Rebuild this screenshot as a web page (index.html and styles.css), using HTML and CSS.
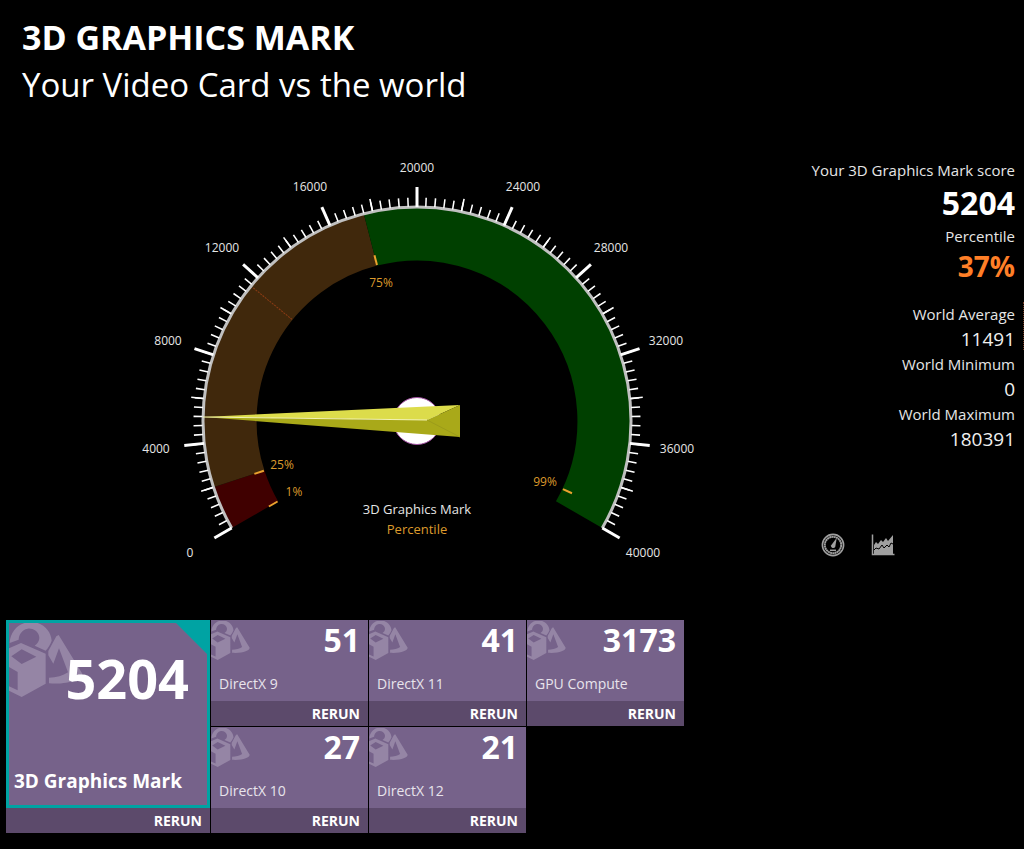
FILE: index.html
```html
<!DOCTYPE html>
<html lang="en">
<head>
<meta charset="utf-8">
<title>3D Graphics Mark</title>
<meta name="viewport" content="width=device-width, initial-scale=1">
<link rel="stylesheet" href="styles.css">
</head>
<body>
<svg class="defs" aria-hidden="true">
  <symbol id="shapes" viewBox="0 0 222 222">
    <path d="M2 60C4 22 32 -3 66 -3C102 -3 126 24 128 53C124 64 118 74 110 83L77 68C89 60 93 50 90 38C86 24 72 15 56 17C38 20 29 36 29 50Z"/>
    <path fill-rule="evenodd" d="M0 76L36 60L110 92V182L38 222L0 203V190L26 202V147L0 132ZM7 100L38 79L82 101L38 123Z"/>
    <path d="M149 36L220 152C220 168 180 185 120 181V164C142 164 162 158 177 148L150 76L133 122L118 97V84L142 40Z"/>
  </symbol>
</svg>

<header class="header">
  <h1 class="title">3D GRAPHICS MARK</h1>
  <p class="subtitle">Your Video Card vs the world</p>
</header>

<main>
  <div class="overview">
    <svg class="gauge" viewBox="0 0 560 420" role="img" aria-label="3D Graphics Mark gauge showing 5204">
      <defs>
        <line id="major" y1="-214" y2="-234" class="tick-major"/>
        <line id="marker" y1="-161" y2="-171" class="marker"/>
      </defs>
      <g transform="translate(277 271)">
        <g class="band">
          <path class="low" d="M-161.9 93.5A187 187 0 0 1 -177.8 57.8"/>
          <path class="mid" d="M-177.8 57.8A187 187 0 0 1 -46.5 -181.1"/>
          <path class="high" d="M-46.5 -181.1A187 187 0 0 1 161.9 93.5"/>
        </g>
        <line class="average" y1="-161" y2="-212" transform="rotate(-50.9)"/>
        <path class="rim" d="M-185.3 107A214 214 0 1 1 185.3 107"/>
        <path class="tick-minor" pathLength="100" d="M-189.7 109.5A219 219 0 1 1 189.7 109.5"/>
        <path class="tick-medium" pathLength="20" d="M-191.4 110.5A221 221 0 1 1 191.4 110.5"/>
        <use href="#major" transform="rotate(-120)"/>
        <use href="#major" transform="rotate(-96)"/>
        <use href="#major" transform="rotate(-72)"/>
        <use href="#major" transform="rotate(-48)"/>
        <use href="#major" transform="rotate(-24)"/>
        <use href="#major"/>
        <use href="#major" transform="rotate(24)"/>
        <use href="#major" transform="rotate(48)"/>
        <use href="#major" transform="rotate(72)"/>
        <use href="#major" transform="rotate(96)"/>
        <use href="#major" transform="rotate(120)"/>
        <use href="#marker" transform="rotate(-120)"/>
        <use href="#marker" transform="rotate(-108)"/>
        <use href="#marker" transform="rotate(-14.4)"/>
        <use href="#marker" transform="rotate(115)"/>
        <circle class="hub" r="23.5"/>
        <path class="needle-top" d="M-214 -4L43 -16L10 -1Z"/>
        <path class="needle-base" d="M-214 -4L10 -1L43 -16V16Z"/>
        <path class="needle-ridge" d="M-214 -4L10 -1"/>
        <path class="needle-fold" d="M10 -1L43 16"/>
      </g>
      <g class="scale">
        <text x="50" y="407">0</text>
        <text x="16" y="303">4000</text>
        <text x="28" y="195">8000</text>
        <text x="82" y="102">12000</text>
        <text x="170" y="41">16000</text>
        <text x="277" y="22">20000</text>
        <text x="383" y="41">24000</text>
        <text x="471" y="102">28000</text>
        <text x="526" y="195">32000</text>
        <text x="537" y="303">36000</text>
        <text x="503" y="407">40000</text>
      </g>
      <g class="scale percent">
        <text x="154" y="346">1%</text>
        <text x="142" y="319">25%</text>
        <text x="241" y="137">75%</text>
        <text x="405" y="336">99%</text>
      </g>
      <text class="caption" x="277" y="364">3D Graphics Mark</text>
      <text class="caption percent" x="277" y="384">Percentile</text>
    </svg>

    <aside class="stats">
      <dl class="figures">
        <dt>Your 3D Graphics Mark score</dt>
        <dd class="score">5204</dd>
        <dt>Percentile</dt>
        <dd class="rank">37%</dd>
        <dt>World Average</dt>
        <dd>11491</dd>
        <dt>World Minimum</dt>
        <dd>0</dd>
        <dt>World Maximum</dt>
        <dd>180391</dd>
      </dl>
      <div class="views">
        <button class="view" type="button" aria-label="Gauge view">
          <svg viewBox="0 0 24 24">
            <circle cx="12" cy="12" r="10.6" fill="none" stroke="currentColor" stroke-width="1.6"/>
            <circle cx="12" cy="12" r="8.2" fill="none" stroke="currentColor" stroke-width="1.9" stroke-dasharray="2 .3"/>
            <path d="M15.8 4.8L14.2 14A2.3 2.3 0 0 1 10 12.4Z" fill="currentColor"/>
            <path d="M9 17.3h6" stroke="currentColor" stroke-width="1.5"/>
          </svg>
        </button>
        <button class="view" type="button" aria-label="Chart view">
          <svg viewBox="0 0 24 24">
            <path d="M1.5 1.5V21.5H23.5" fill="none" stroke="currentColor" stroke-width="1.5"/>
            <path d="M3 12L5 9L7 11L10 7L12 9L15 5L17 8L22 2V21H3Z" fill="currentColor"/>
            <path d="M3 17L5 15L8 16L11 12L13 15L16 12L18 14L20 10L22 11" fill="none" stroke="#000" stroke-width="1"/>
          </svg>
        </button>
      </div>
    </aside>
  </div>

  <section class="tiles" aria-label="Test results">
    <article class="tile tile-main">
      <div class="tile-body">
        <svg class="tile-icon" aria-hidden="true"><use href="#shapes"/></svg>
        <strong class="tile-score">5204</strong>
        <h2 class="tile-name">3D Graphics Mark</h2>
      </div>
      <button class="rerun" type="button">RERUN</button>
    </article>
    <article class="tile">
      <div class="tile-body">
        <svg class="tile-icon" aria-hidden="true"><use href="#shapes"/></svg>
        <strong class="tile-score">51</strong>
        <h2 class="tile-name">DirectX 9</h2>
      </div>
      <button class="rerun" type="button">RERUN</button>
    </article>
    <article class="tile">
      <div class="tile-body">
        <svg class="tile-icon" aria-hidden="true"><use href="#shapes"/></svg>
        <strong class="tile-score">41</strong>
        <h2 class="tile-name">DirectX 11</h2>
      </div>
      <button class="rerun" type="button">RERUN</button>
    </article>
    <article class="tile">
      <div class="tile-body">
        <svg class="tile-icon" aria-hidden="true"><use href="#shapes"/></svg>
        <strong class="tile-score">3173</strong>
        <h2 class="tile-name">GPU Compute</h2>
      </div>
      <button class="rerun" type="button">RERUN</button>
    </article>
    <article class="tile">
      <div class="tile-body">
        <svg class="tile-icon" aria-hidden="true"><use href="#shapes"/></svg>
        <strong class="tile-score">27</strong>
        <h2 class="tile-name">DirectX 10</h2>
      </div>
      <button class="rerun" type="button">RERUN</button>
    </article>
    <article class="tile">
      <div class="tile-body">
        <svg class="tile-icon" aria-hidden="true"><use href="#shapes"/></svg>
        <strong class="tile-score">21</strong>
        <h2 class="tile-name">DirectX 12</h2>
      </div>
      <button class="rerun" type="button">RERUN</button>
    </article>
  </section>
</main>
</body>
</html>
```
FILE: styles.css
```css
* { box-sizing: border-box; }

body {
  margin: 0;
  background: #000;
  color: #fff;
  font-family: "Open Sans", "Noto Sans", sans-serif;
}

h1, h2, p, dl, dd { margin: 0; }

button {
  border: 0;
  font: inherit;
  color: inherit;
  cursor: pointer;
}

.defs {
  position: absolute;
  width: 0;
  height: 0;
}

/* Header */
.header { padding: 13px 22px 0; }

.title {
  font-size: 34px;
  line-height: 48px;
  font-weight: 700;
}

.subtitle {
  font-size: 33px;
  line-height: 47px;
  font-weight: 400;
}

/* Gauge and figures */
.overview {
  display: flex;
  justify-content: space-between;
  align-items: flex-start;
  padding: 42px 0 50px 140px;
}

.gauge {
  flex: 0 1 560px;
  min-width: 0;
  overflow: visible;
}

.band path { fill: none; stroke-width: 53; }
.band .low { stroke: #400000; }
.band .mid { stroke: #40280c; }
.band .high { stroke: #004000; }
.average { stroke: #8c3c14; stroke-width: 1; stroke-dasharray: 2 1; }
.rim { fill: none; stroke: #c0c0c0; stroke-width: 3; }

.tick-minor, .tick-medium { fill: none; stroke: #fff; }
.tick-minor { stroke-width: 9; stroke-dasharray: .17 .83; stroke-dashoffset: .085; }
.tick-medium { stroke-width: 12; stroke-dasharray: .034 .966; stroke-dashoffset: .017; }
.tick-major { stroke: #fff; stroke-width: 3; }
.marker { stroke: #eba22e; stroke-width: 2; }

.hub { fill: #fff; stroke: #a050a0; stroke-width: 1; }
.needle-top { fill: #dcdc4b; }
.needle-base { fill: #a9a919; }
.needle-ridge { stroke: #f4f4b4; stroke-width: 1; }
.needle-fold { stroke: #9c9c1a; stroke-width: 1; }

.scale { fill: #e6e6e6; font-size: 12px; text-anchor: middle; }
.caption { fill: #e6e6e6; font-size: 13px; text-anchor: middle; }
.percent { fill: #dd9a2c; }

.stats {
  position: relative;
  flex: 0 0 220px;
  padding: 8px 9px 0 0;
}

/* Edge of the dotted page divider */
.stats::after {
  content: "";
  position: absolute;
  top: 152px;
  right: 0;
  height: 48px;
  border-right: 1px dotted #703a22;
}

.figures { text-align: right; }

.figures dt {
  color: #e6e6e6;
  font-size: 15px;
  line-height: 24px;
}

.figures dd {
  color: #f0f0f0;
  font-size: 19px;
  line-height: 26px;
}

.figures .score {
  color: #fff;
  font-size: 32px;
  line-height: 42px;
  font-weight: 700;
}

.figures .rank {
  padding-bottom: 18px;
  color: #ff7f27;
  font-size: 28px;
  line-height: 36px;
  font-weight: 700;
}

.views {
  display: flex;
  gap: 26px;
  padding: 81px 0 0 17px;
}

.view {
  width: 24px;
  height: 24px;
  padding: 0;
  background: none;
  color: #a0a0a0;
}

.view svg { display: block; }

/* Tiles */
.tiles {
  display: grid;
  grid-template-columns: minmax(0, 204px) repeat(3, minmax(0, 157px));
  gap: 1px;
  padding: 0 6px 16px;
}

.tile {
  display: flex;
  flex-direction: column;
  background: #76628a;
}

.tile-body {
  position: relative;
  display: flex;
  flex: 1;
  flex-direction: column;
  justify-content: space-between;
  min-height: 81px;
  padding: 0 8px 6px;
}

.tile-icon {
  position: absolute;
  top: 1px;
  left: 0;
  width: 39px;
  height: 39px;
  fill: #9585a5;
}

.tile-score {
  position: relative;
  align-self: flex-end;
  font-size: 32px;
  line-height: 40px;
}

.tile-name {
  position: relative;
  color: #e8e4ec;
  font-size: 14px;
  line-height: 22px;
  font-weight: 400;
}

.rerun {
  height: 25px;
  padding: 0 8px;
  background: #5c4a6b;
  font-size: 14px;
  line-height: 25px;
  font-weight: 700;
  text-align: right;
}

.tile-main { grid-row: span 2; }

.tile-main .tile-body {
  padding: 21px 18px 9px 5px;
  border: 3px solid #00a3a3;
}

.tile-main .tile-body::after {
  content: "";
  position: absolute;
  top: 0;
  right: 0;
  width: 31px;
  height: 31px;
  background: #00a3a3;
  clip-path: polygon(0 0, 100% 0, 100% 100%);
}

.tile-main .tile-icon {
  top: 0;
  width: 74px;
  height: 74px;
}

.tile-main .tile-score {
  font-size: 54px;
  line-height: 68px;
}

.tile-main .tile-name {
  color: #fff;
  font-size: 19px;
  line-height: 30px;
  font-weight: 700;
}
```
